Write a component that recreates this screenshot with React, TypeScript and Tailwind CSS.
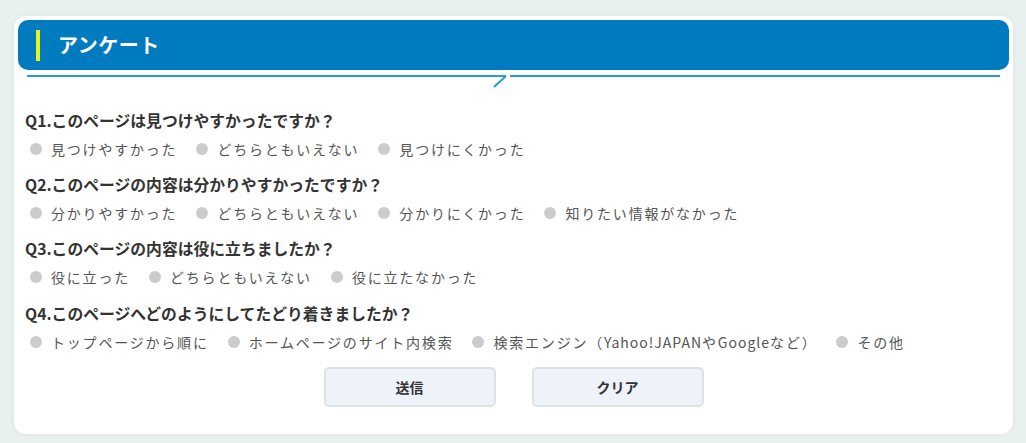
import React from "react";

const questions: { q: string; opts: React.ReactNode[] }[] = [
  { q: "Q1.このページは見つけやすかったですか？", opts: ["見つけやすかった", "どちらともいえない", "見つけにくかった"] },
  { q: "Q2.このページの内容は分かりやすかったですか？", opts: ["分かりやすかった", "どちらともいえない", "分かりにくかった", "知りたい情報がなかった"] },
  { q: "Q3.このページの内容は役に立ちましたか？", opts: ["役に立った", "どちらともいえない", "役に立たなかった"] },
  {
    q: "Q4.このページへどのようにしてたどり着きましたか？",
    opts: [
      "トップページから順に",
      "ホームページのサイト内検索",
      <>
        検索エンジン（<span className="tracking-[1px]">Yahoo!JAPAN</span>や<span className="tracking-[1px]">Google</span>など）
      </>,
      "その他",
    ],
  },
];

export default function App() {
  return (
    <div
      className="w-[1026px] h-[443px] bg-[#e8f0f0] pt-[16px] pl-[14px] overflow-hidden"
      style={{ fontFamily: '"Noto Sans CJK JP", "Noto Sans", sans-serif' }}
    >
      <div className="w-[999px] h-[418px] bg-white rounded-[12px] p-[4px] shadow-[0_0_6px_rgba(0,0,0,0.06)]">
        <div className="h-[50px] bg-[#007bc0] rounded-[10px] flex items-center pl-[18px]">
          <div className="w-[4px] h-[31px] bg-[#e4f51a]" />
          <div className="ml-[18px] text-white font-bold text-[20px] leading-none tracking-[0.5px]">アンケート</div>
        </div>
        <div className="relative h-[18px] mt-[5px] ml-[9px] w-[973px]">
          <div className="absolute left-0 top-0 w-[479px] h-[2px] bg-[#2a9ad6]" />
          <svg className="absolute left-[462px] top-0" width="20" height="14" viewBox="0 0 20 14">
            <line x1="17" y1="1" x2="5" y2="12" stroke="#2a9ad6" strokeWidth="2" />
          </svg>
          <div className="absolute left-[483px] top-0 w-[490px] h-[2px] bg-[#2a9ad6]" />
        </div>
        <div className="pl-[7px] mt-[16px]">
          {questions.map((item, i) => (
            <div key={i} className={i === 0 ? "" : i === 3 ? "mt-[13px]" : "mt-[12px]"}>
              <div className="text-[15.8px] font-bold text-[#333] leading-[24px] h-[24px]">{item.q}</div>
              <div className="mt-[4px] h-[24px] flex items-center pl-[5px] gap-[19px]">
                {item.opts.map((o, j) => (
                  <div key={j} className="flex items-center">
                    <div className="w-[12px] h-[12px] rounded-full bg-[#cccccc]" />
                    <div className="ml-[9px] text-[14px] text-[#555] tracking-[1.8px] leading-[24px] whitespace-nowrap">{o}</div>
                  </div>
                ))}
              </div>
            </div>
          ))}
        </div>
        <div className="mt-[13px] flex justify-center gap-[36px]">
          <button className="w-[172px] h-[40px] bg-[#eef2f9] border-2 border-[#dde2ea] rounded-[5px] text-[14px] font-bold text-[#333]">
            送信
          </button>
          <button className="w-[172px] h-[40px] bg-[#eef2f9] border-2 border-[#dde2ea] rounded-[5px] text-[14px] font-bold text-[#333]">
            クリア
          </button>
        </div>
      </div>
    </div>
  );
}
